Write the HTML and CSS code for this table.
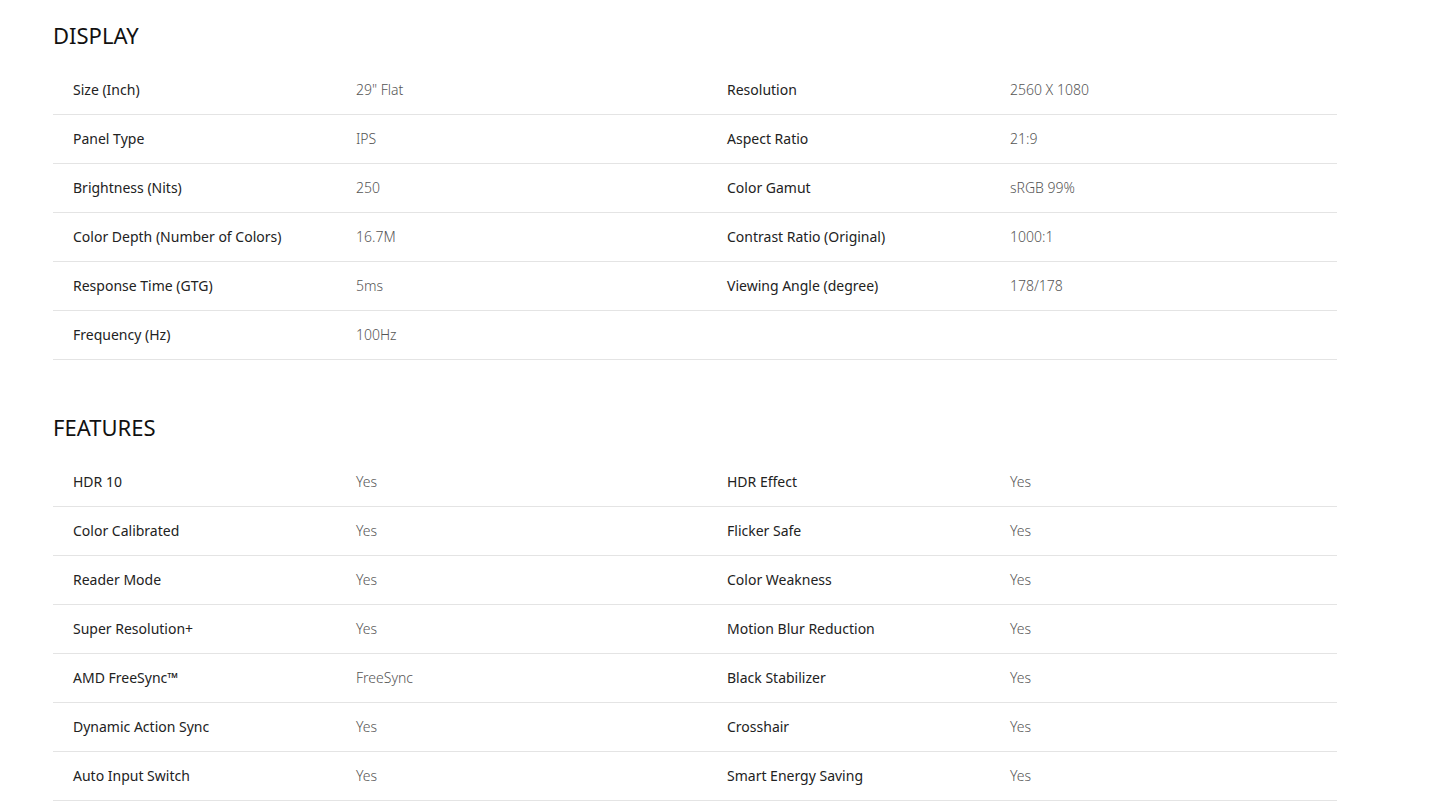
FILE: index.html
```html
<!DOCTYPE html>
<html lang="en">
<head>
<meta charset="utf-8">
<title>Specs</title>
<link rel="stylesheet" href="styles.css">
</head>
<body>
<main class="specs">
  <section class="spec-section">
    <h2 class="spec-title">DISPLAY</h2>
    <div class="spec-row">
      <div class="spec-label">Size (Inch)</div><div class="spec-value">29" Flat</div>
      <div class="spec-label">Resolution</div><div class="spec-value">2560 X 1080</div>
    </div>
    <div class="spec-row">
      <div class="spec-label">Panel Type</div><div class="spec-value">IPS</div>
      <div class="spec-label">Aspect Ratio</div><div class="spec-value">21:9</div>
    </div>
    <div class="spec-row">
      <div class="spec-label">Brightness (Nits)</div><div class="spec-value">250</div>
      <div class="spec-label">Color Gamut</div><div class="spec-value">sRGB 99%</div>
    </div>
    <div class="spec-row">
      <div class="spec-label">Color Depth (Number of Colors)</div><div class="spec-value">16.7M</div>
      <div class="spec-label">Contrast Ratio (Original)</div><div class="spec-value">1000:1</div>
    </div>
    <div class="spec-row">
      <div class="spec-label">Response Time (GTG)</div><div class="spec-value">5ms</div>
      <div class="spec-label">Viewing Angle (degree)</div><div class="spec-value">178/178</div>
    </div>
    <div class="spec-row">
      <div class="spec-label">Frequency (Hz)</div><div class="spec-value">100Hz</div>
      <div class="spec-label"></div><div class="spec-value"></div>
    </div>
  </section>
  <section class="spec-section">
    <h2 class="spec-title">FEATURES</h2>
    <div class="spec-row">
      <div class="spec-label">HDR 10</div><div class="spec-value">Yes</div>
      <div class="spec-label">HDR Effect</div><div class="spec-value">Yes</div>
    </div>
    <div class="spec-row">
      <div class="spec-label">Color Calibrated</div><div class="spec-value">Yes</div>
      <div class="spec-label">Flicker Safe</div><div class="spec-value">Yes</div>
    </div>
    <div class="spec-row">
      <div class="spec-label">Reader Mode</div><div class="spec-value">Yes</div>
      <div class="spec-label">Color Weakness</div><div class="spec-value">Yes</div>
    </div>
    <div class="spec-row">
      <div class="spec-label">Super Resolution+</div><div class="spec-value">Yes</div>
      <div class="spec-label">Motion Blur Reduction</div><div class="spec-value">Yes</div>
    </div>
    <div class="spec-row">
      <div class="spec-label">AMD FreeSync™</div><div class="spec-value">FreeSync</div>
      <div class="spec-label">Black Stabilizer</div><div class="spec-value">Yes</div>
    </div>
    <div class="spec-row">
      <div class="spec-label">Dynamic Action Sync</div><div class="spec-value">Yes</div>
      <div class="spec-label">Crosshair</div><div class="spec-value">Yes</div>
    </div>
    <div class="spec-row">
      <div class="spec-label">Auto Input Switch</div><div class="spec-value">Yes</div>
      <div class="spec-label">Smart Energy Saving</div><div class="spec-value">Yes</div>
    </div>
  </section>
</main>
</body>
</html>
```
FILE: styles.css
```css
html, body {
  margin: 0;
  padding: 0;
  background: #fff;
}
body {
  font-family: "Noto Sans", "Open Sans", "Liberation Sans", sans-serif;
  color: #222;
}
.specs {
  width: 1284px;
  margin-left: 53px;
}
.spec-section {
  padding-top: 20px;
  margin-bottom: 32px;
}
.spec-title {
  margin: 0 0 16px;
  font-size: 22px;
  line-height: 30px;
  font-weight: 400;
  color: #111;
}
.spec-row {
  box-sizing: border-box;
  display: grid;
  grid-template-columns: 283px 371px 283px 1fr;
  padding: 0 0 2px 20px;
  height: 49px;
  align-items: center;
  border-bottom: 1px solid #e4e4e4;
}
.spec-label {
  font-size: 14px;
  color: #222;
}
.spec-value {
  font-size: 14px;
  font-weight: 300;
  color: #555;
}
```
